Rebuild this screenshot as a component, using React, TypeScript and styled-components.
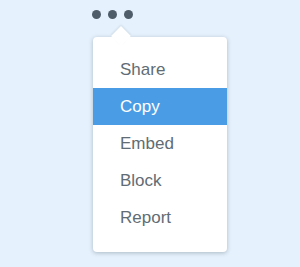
import React from "react";
import styled, { createGlobalStyle } from "styled-components";

const GlobalStyle = createGlobalStyle`
  html, body {
    margin: 0;
    padding: 0;
    background: #e5f1fc;
    font-family: "Liberation Sans", Arial, sans-serif;
  }
`;

const Page = styled.div`
  width: 300px;
  height: 267px;
  padding: 10px 0 0 93px;
  box-sizing: border-box;
`;

const Dots = styled.div`
  display: flex;
  gap: 7px;
  padding-left: -1px;
  margin-left: -1px;
`;

const Dot = styled.span`
  width: 9px;
  height: 9px;
  border-radius: 50%;
  background: #4e5c69;
`;

const Menu = styled.div`
  position: relative;
  margin-top: 18px;
  width: 134px;
  padding: 14px 0 16px;
  background: #fff;
  border-radius: 4px;
  box-shadow: 0 1px 4px rgba(60, 80, 100, 0.35);

  &::before {
    content: "";
    position: absolute;
    top: -8px;
    left: 21px;
    width: 14px;
    height: 14px;
    background: #fff;
    transform: rotate(45deg);
    box-shadow: -1px -1px 2px rgba(60, 80, 100, 0.12);
  }
`;

const Item = styled.div<{ $active?: boolean }>`
  position: relative;
  height: 37px;
  line-height: 37px;
  padding-left: 27px;
  font-size: 17px;
  color: ${(p) => (p.$active ? "#fff" : "#616c74")};
  background: ${(p) => (p.$active ? "#4a9de4" : "transparent")};
`;

const items = ["Share", "Copy", "Embed", "Block", "Report"];

export default function App() {
  return (
    <>
      <GlobalStyle />
      <Page>
        <Dots>
          <Dot />
          <Dot />
          <Dot />
        </Dots>
        <Menu>
          {items.map((label) => (
            <Item key={label} $active={label === "Copy"}>
              {label}
            </Item>
          ))}
        </Menu>
      </Page>
    </>
  );
}
